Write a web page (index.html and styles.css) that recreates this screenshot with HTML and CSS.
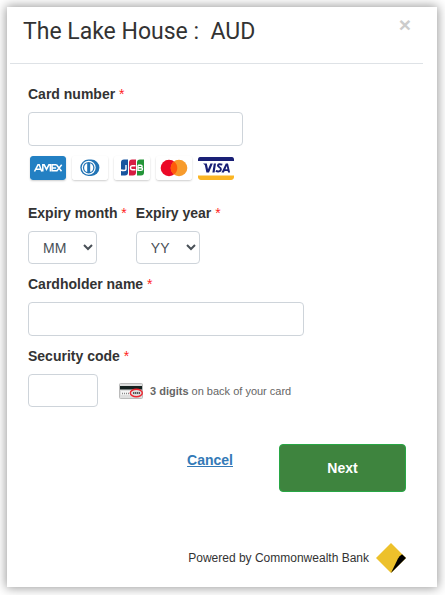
FILE: index.html
```html
<!DOCTYPE html>
<html lang="en">
<head>
<meta charset="utf-8">
<meta name="viewport" content="width=device-width, initial-scale=1">
<title>Card payment</title>
<link rel="stylesheet" href="styles.css">
</head>
<body>
<main class="dialog">
  <header class="dialog-header">
    <h1 class="title">The Lake House :&nbsp; AUD</h1>
    <button class="close" type="button" aria-label="Close">×</button>
  </header>
  <form class="form">
    <div class="field">
      <label for="number">Card number <span class="required">*</span></label>
      <input class="control number" id="number" type="text">
    </div>
    <div class="brands">
      <svg class="brand" viewBox="0 0 36 24" role="img" aria-label="American Express">
        <rect width="36" height="24" rx="2" fill="#2380c3"/>
        <g fill="none" stroke="#fff" stroke-width="1.5">
          <path d="M4.5 15.5 8 8.8h1.2l2.6 6.7M6.3 13.3h4.5M12.8 15.5V8.8h1.4l2.3 4.5 2.4-4.5h1.5v6.7M26.5 8.8h-4.4v6h4.4M22.1 11.9h4M26.5 8.8l5 6.5M31.7 8.8l-5.2 6.5"/>
        </g>
      </svg>
      <svg class="brand" viewBox="0 0 36 24" role="img" aria-label="Diners Club">
        <rect width="36" height="24" rx="2" fill="#fff"/>
        <path d="M16.5 3.5h2.7a8.2 8.2 0 0 1 0 16.4h-2.7a8.2 8.2 0 0 1 0-16.4z" fill="#2274b5"/>
        <circle cx="16.7" cy="11.7" r="7" fill="#fff"/>
        <circle cx="16.7" cy="11.7" r="5.8" fill="#2274b5"/>
        <path d="M15.2 7.3a4.7 4.7 0 0 0 0 8.8zM18.2 7.3a4.7 4.7 0 0 1 0 8.8z" fill="#fff"/>
      </svg>
      <svg class="brand" viewBox="0 0 36 24" role="img" aria-label="JCB">
        <rect width="36" height="24" rx="2" fill="#fff"/>
        <path d="M10 3.5h4v13q0 3-3 3H7v-13q0-3 3-3z" fill="#18559f"/>
        <path d="M18 3.5h4v13q0 3-3 3h-4v-13q0-3 3-3z" fill="#d71e43"/>
        <path d="M26 3.5h4v13q0 3-3 3h-4v-13q0-3 3-3z" fill="#249539"/>
        <g fill="none" stroke="#fff" stroke-width="1.4">
          <path d="M12 9v4q0 1.5-2 1.5T7 14M21.5 9.8h-3q-2 0-2 2t2 2h3M24 9.2v5.2h3q1.5 0 1.5-1.3T27 11.8h-3M24 9.2h2.7q1.4 0 1.4 1.3T27 11.8"/>
        </g>
      </svg>
      <svg class="brand" viewBox="0 0 36 24" role="img" aria-label="Mastercard">
        <rect width="36" height="24" rx="2" fill="#fff"/>
        <circle cx="13" cy="12" r="8.3" fill="#eb0927"/>
        <circle cx="23" cy="12" r="8.3" fill="#f79b2c"/>
        <path d="M18 5.4a8.3 8.3 0 0 1 0 13.2 8.3 8.3 0 0 1 0-13.2z" fill="#ff5a0a"/>
      </svg>
      <svg class="brand visa" viewBox="0 0 36 24" role="img" aria-label="Visa">
        <rect width="36" height="24" rx="2" fill="#fff"/>
        <path d="M0 5V3q0-2 2-2h32q2 0 2 2v2z" fill="#1a2076"/>
        <path d="M0 19.5h36V22q0 2-2 2H2q-2 0-2-2z" fill="#fbb524"/>
        <g fill="#1a2076">
          <path d="M5 7.5h3.8l1.2 5.8 2.4-5.8h2.4L11 16.5H8.4L6.8 9zM15.8 7.5H18l-1.4 9h-2.2zM30 7.5h-2.2L23.5 16.5h2.4l.7-1.6h3.1l.3 1.6h2.1zm-.6 5.7h-2l1.4-3.3z"/>
        </g>
        <path d="M24.3 8.7q-4.2-1.3-4.4.9c0 1.8 3.2 1.6 3 3.7-.2 2.4-3 2.6-5.1 1.6" fill="none" stroke="#1a2076" stroke-width="1.9"/>
      </svg>
    </div>
    <div class="expiry">
      <div class="field">
        <label for="month">Expiry month <span class="required">*</span></label>
        <select class="control month" id="month"><option>MM</option></select>
      </div>
      <div class="field">
        <label for="year">Expiry year <span class="required">*</span></label>
        <select class="control year" id="year"><option>YY</option></select>
      </div>
    </div>
    <div class="field">
      <label for="name">Cardholder name <span class="required">*</span></label>
      <input class="control name" id="name" type="text">
    </div>
    <div class="field">
      <label for="code">Security code <span class="required">*</span></label>
      <div class="security">
        <input class="control code" id="code" type="text">
        <svg class="card-back" viewBox="0 0 24 16" aria-hidden="true">
          <rect x=".5" y=".5" width="23" height="15" rx="1" fill="#dedede" stroke="#bbb"/>
          <path d="M1 3h22v3.5H1z" fill="#14211f"/>
          <path d="M2 8h18v4H2z" fill="#f5f5f5"/>
          <path d="M3 10.5h8" stroke="#888" stroke-width="1.6" stroke-dasharray="1 1"/>
          <ellipse cx="17.3" cy="10" rx="6" ry="3.7" fill="#ddd" stroke="#ed2630" stroke-width="1.4"/>
          <path d="M14 10h7" stroke="#555" stroke-width="2" stroke-dasharray="1.4 .6"/>
        </svg>
        <span class="hint"><b>3 digits</b> on back of your card</span>
      </div>
    </div>
    <div class="actions">
      <a class="cancel" href="#">Cancel</a>
      <button class="next" type="submit">Next</button>
    </div>
  </form>
  <footer class="footer">
    <span>Powered by Commonwealth Bank</span>
    <svg class="bank" viewBox="0 0 30 30" aria-hidden="true">
      <path d="M15 0 30 15 15 30 0 15z" fill="#edc12b"/>
      <path d="M26 11.3 30 15 15 30 22 15.5q1.3-2.5 4-4.2z" fill="#000"/>
    </svg>
  </footer>
</main>
</body>
</html>
```
FILE: styles.css
```css
* {
  box-sizing: border-box;
}

body {
  margin: 0;
  padding: 7px 8px 8px 7px;
  background: #fff;
  color: #333;
  font: 14px/20px "Liberation Sans", Arial, sans-serif;
}

.dialog {
  padding: 0 0 14px;
  background: #fff;
  box-shadow: 0 0 10px 1px rgba(0, 0, 0, 0.4);
}

.dialog-header {
  display: flex;
  justify-content: space-between;
  align-items: flex-start;
  height: 57px;
  margin: 0 14px 0 3px;
  padding: 8px 12px 0 13px;
  border-bottom: 1px solid #dee2e6;
}

.title {
  margin: 0;
  font: 400 23px/34px Roboto, sans-serif;
}

.close {
  padding: 0;
  border: 0;
  background: none;
  color: #ccc;
  font: bold 21px/20px "Liberation Sans", Arial, sans-serif;
}

.form {
  padding: 20px 31px 0 21px;
}

.field {
  margin-bottom: 10px;
}

label {
  display: block;
  margin-bottom: 8px;
  font-weight: bold;
}

.required {
  color: #f22;
  font-weight: normal;
}

.control {
  display: block;
  max-width: 100%;
  height: 34px;
  padding: 0 12px;
  border: 1px solid #ced4da;
  border-radius: 4px;
  background: #fff;
  color: #495057;
  font: 14px/20px "Liberation Sans", Arial, sans-serif;
}

select.control {
  height: 33px;
  padding: 0 0 0 10px;
}

.number {
  width: 215px;
}

.name {
  width: 276px;
}

.month {
  width: 69px;
}

.year {
  width: 64px;
}

.control.code {
  width: 70px;
  height: 33px;
}

.brands {
  display: flex;
  gap: 6px;
  margin: 0 0 23px 2px;
}

.brand {
  width: 36px;
  height: 24px;
  border-radius: 3px;
  box-shadow: 0 1px 2px rgba(0, 0, 0, 0.2);
}

.visa {
  box-shadow: none;
}

.expiry {
  display: flex;
  gap: 9px;
}

.security {
  display: flex;
  align-items: center;
}

.card-back {
  width: 24px;
  height: 16px;
  margin: 0 7px 0 21px;
}

.hint {
  color: #666;
  font-size: 11px;
}

.actions {
  display: flex;
  justify-content: flex-end;
  gap: 46px;
  margin-top: 37px;
}

.cancel {
  padding-top: 6px;
  color: #337ab7;
  font-weight: bold;
}

.next {
  width: 127px;
  height: 48px;
  border: 1px solid #28a745;
  border-radius: 4px;
  background: #3e843e;
  color: #fff;
  font: bold 14px/20px "Liberation Sans", Arial, sans-serif;
}

.footer {
  display: flex;
  justify-content: flex-end;
  align-items: center;
  gap: 7px;
  margin-top: 51px;
  padding-right: 31px;
  font-size: 12px;
}

.bank {
  width: 30px;
  height: 30px;
}
```
